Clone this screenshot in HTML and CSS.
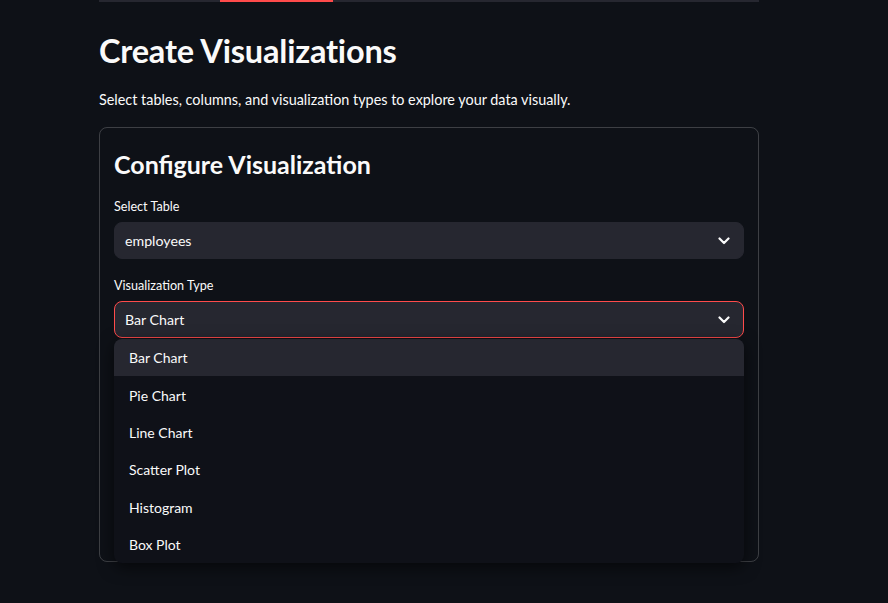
FILE: index.html
```html
<!DOCTYPE html>
<html>
<head>
<meta charset="utf-8">
<link rel="stylesheet" href="styles.css">
</head>
<body>
<div class="main">
  <div class="tabline"><div class="tab-active"></div></div>
  <h1 class="title">Create Visualizations</h1>
  <p class="subtitle">Select tables, columns, and visualization types to explore your data visually.</p>
  <div class="card">
    <h2 class="card-title">Configure Visualization</h2>
    <div class="field">
      <div class="label">Select Table</div>
      <div class="select">
        <span class="value">employees</span>
        <svg class="chev" width="12" height="8" viewBox="0 0 12 8"><path d="M1.5 1.5 L6 6 L10.5 1.5" fill="none" stroke="#fafafa" stroke-width="2.2" stroke-linecap="round" stroke-linejoin="round"/></svg>
      </div>
    </div>
    <div class="field field-open">
      <div class="label">Visualization Type</div>
      <div class="select select-focus">
        <span class="value">Bar Chart</span>
        <svg class="chev" width="12" height="8" viewBox="0 0 12 8"><path d="M1.5 1.5 L6 6 L10.5 1.5" fill="none" stroke="#fafafa" stroke-width="2.2" stroke-linecap="round" stroke-linejoin="round"/></svg>
      </div>
      <ul class="menu">
        <li class="opt opt-hover">Bar Chart</li>
        <li class="opt">Pie Chart</li>
        <li class="opt">Line Chart</li>
        <li class="opt">Scatter Plot</li>
        <li class="opt">Histogram</li>
        <li class="opt">Box Plot</li>
      </ul>
    </div>
  </div>
</div>
</body>
</html>
```
FILE: styles.css
```css
html, body {
  margin: 0;
  padding: 0;
  background: #0e1117;
  color: #fafafa;
  font-family: "Lato", "Source Sans Pro", "Liberation Sans", sans-serif;
  height: 603px;
  overflow: hidden;
}
.main {
  width: 660px;
  margin-left: 99px;
}
.tabline {
  height: 2px;
  background: #262730;
}
.tab-active {
  margin-left: 121px;
  width: 113px;
  height: 2px;
  background: #ff4b4b;
}
.title {
  margin: 0;
  padding-top: 29px;
  font-size: 32.5px;
  font-weight: 700;
  line-height: 40px;
  letter-spacing: -0.2px;
}
.subtitle {
  margin: 0;
  padding-top: 19px;
  font-size: 14.4px;
  line-height: 20px;
}
.card {
  margin-top: 17px;
  border: 1px solid rgba(250, 250, 250, 0.2);
  border-radius: 8px;
  padding: 14px 14px 0 14px;
  height: 435px;
  box-sizing: border-box;
}
.card-title {
  margin: 0;
  padding-top: 5px;
  font-size: 25px;
  line-height: 34px;
  font-weight: 700;
}
.field {
  margin-top: 18px;
}
.field + .field {
  margin-top: 19px;
}
.field-open {
  position: relative;
}
.label {
  font-size: 12.6px;
  line-height: 16px;
  margin-bottom: 7px;
}
.select {
  height: 37px;
  box-sizing: border-box;
  background: #262730;
  border: 1px solid #262730;
  border-radius: 8px;
  display: flex;
  align-items: center;
  justify-content: space-between;
  padding: 0 13px 0 10px;
  font-size: 14.2px;
}
.select-focus {
  border-color: #ff4b4b;
}
.chev {
  display: block;
}
.menu {
  position: absolute;
  left: 0;
  right: 0;
  top: 61px;
  margin: 0;
  padding: 0;
  list-style: none;
  background: #0f1118;
  border-radius: 8px;
  overflow: hidden;
  box-shadow: 0 4px 16px rgba(0, 0, 0, 0.6);
  z-index: 2;
}
.opt {
  height: 37.4px;
  display: flex;
  align-items: center;
  padding-left: 15px;
  font-size: 14px;
}
.opt-hover {
  background: #262730;
}
```
